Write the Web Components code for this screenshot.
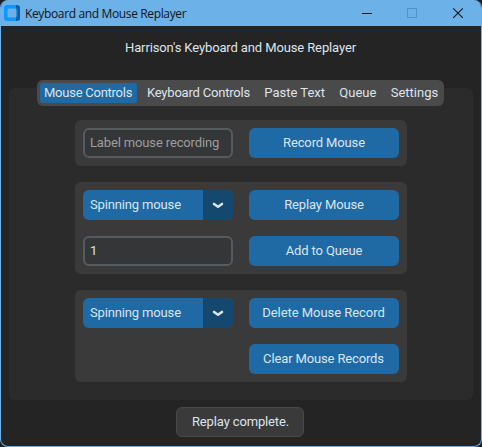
<!DOCTYPE html>
<html lang="en">
<head>
<meta charset="utf-8">
<title>Keyboard and Mouse Replayer</title>
<style>
html, body { margin: 0; height: 100%; background: #16212c; overflow: hidden; }
body { font: 13px/16px Roboto, sans-serif; letter-spacing: -0.14px; color: #dce4ee; }
</style>
</head>
<body>
<replayer-app></replayer-app>
<script>
const define = (name, html) => customElements.define(name, class extends HTMLElement {
  constructor() {
    super();
    this.attachShadow({ mode: 'open' }).innerHTML = html;
  }
});

define('app-window', `
<style>
:host { display: flex; flex-direction: column; box-sizing: border-box; width: 482px; height: 447px;
  background: #242424; border: 1px solid #6cb1e8; border-top: 0; border-radius: 8px; overflow: hidden; }
header { flex: none; height: 26px; display: flex; align-items: center; background: #6cb1e8; color: #10161c;
  font: 12px/16px "Open Sans", sans-serif; padding-left: 3px; }
.logo { flex: none; width: 16px; height: 16px; margin-right: 5px; }
.name { flex: 1; white-space: nowrap; letter-spacing: -0.36px; padding-top: 1px; }
.buttons { flex: none; width: 137px; height: 26px; }
main { flex: 1; display: flex; flex-direction: column; }
</style>
<header>
  <svg class="logo" viewBox="0 0 16 16">
    <path d="M10 0h3a3 3 0 0 1 3 3v10a3 3 0 0 1-3 3h-3z" fill="#0860a8"/>
    <path d="M3 0h9v16H3a3 3 0 0 1-3-3V3a3 3 0 0 1 3-3z" fill="#0c98ff"/>
    <path d="M12 4l2-2v12l-2-2z" fill="#086fc2"/>
    <rect x="3.500" y="3.500" width="9" height="9" rx="1.500" fill="#6cb1e8"/>
  </svg>
  <span class="name"><slot name="title"></slot></span>
  <svg class="buttons" viewBox="344 0 137 26" fill="none">
    <path d="M362 13.500h10" stroke="#10161c"/>
    <rect x="407.500" y="8.500" width="9" height="9" stroke="#5392c4"/>
    <path d="M453.200 8.300l9.600 9.600M462.800 8.300l-9.600 9.600" stroke="#10161c" stroke-width="1.100"/>
  </svg>
</header>
<main><slot></slot></main>`);

define('tab-item', `
<style>
:host { display: block; box-sizing: border-box; height: 20px; padding: 2px 4.500px; border-radius: 3px; white-space: nowrap; }
:host([selected]) { background: #1f6aa5; padding-left: 4px; padding-right: 5px; }
</style><slot></slot>`);

define('tab-view', `
<style>
:host { display: flex; flex-direction: column; align-items: center; width: 464px; height: 320px; margin: 0 auto;
  position: relative; z-index: 0; }
.panel { position: absolute; z-index: -1; inset: 8px 0 0 0; background: #2b2b2b; border-radius: 6px; }
nav { box-sizing: border-box; display: flex; gap: 5.300px; width: 407px; height: 26px; margin-right: 1px; padding: 3px; background: #4a4a4a; border-radius: 6px; }
section { display: flex; flex-direction: column; gap: 16px; padding-top: 14px; }
</style>
<div class="panel"></div>
<nav><slot name="tab"></slot></nav>
<section><slot></slot></section>`);

define('control-card', `
<style>
:host { display: grid; grid-template-columns: 150px 150px; grid-auto-rows: 30px; gap: 16px; padding: 8px;
  background: #3a3a3a; border-radius: 6px; }
::slotted(*) { box-sizing: border-box; }
</style><slot></slot>`);

define('text-entry', `
<style>
:host { display: flex; align-items: center; padding: 0 5px 1px; border: 2px solid #565b5e; border-radius: 6px; background: #343638; white-space: nowrap; letter-spacing: -0.14px; }
:host([placeholder]) { color: #9e9e9c; }
</style><slot></slot>`);

define('action-button', `
<style>
:host { display: flex; align-items: center; justify-content: center; padding-bottom: 1px; border-radius: 6px; background: #1f6aa5; white-space: nowrap; grid-column: 2; }
</style><slot></slot>`);

define('option-menu', `
<style>
:host { display: flex; border-radius: 6px; overflow: hidden; background: #1f6aa5; letter-spacing: -0.15px; }
.value { flex: 1; padding: 6.500px 7px; white-space: nowrap; }
.arrow { flex: none; width: 30px; height: 30px; background: #14486f; }
</style>
<span class="value"><slot></slot></span>
<svg class="arrow" viewBox="0 0 30 30"><path d="M11 13.900l4 2.900 4-2.900" fill="none" stroke="#dce4ee" stroke-width="2.500" stroke-linecap="round" stroke-linejoin="round"/></svg>`);

define('status-label', `
<style>
:host { display: flex; align-items: center; justify-content: center; box-sizing: border-box; width: 128px; height: 30px;
  margin: 7px 0 0 175px; padding-bottom: 1px; padding-left: 1px; border: 1px solid #494949; border-radius: 6px; background: #3a3a3a; white-space: nowrap; }
</style><slot></slot>`);

define('replayer-app', `
<style>
:host { display: block; }
.heading { height: 16px; padding: 14px 1px 24px 0; text-align: center; letter-spacing: -0.12px; }
.tight { letter-spacing: -0.25px; }
.snug { letter-spacing: -0.2px; }
.loose { letter-spacing: 0; }
.wide { letter-spacing: -0.05px; }
.wide, .clear { padding-right: 1px; }
</style>
<app-window>
  <span slot="title">Keyboard and Mouse Replayer</span>
  <div class="heading">Harrison's Keyboard and Mouse Replayer</div>
  <tab-view>
    <tab-item slot="tab" class="tight" selected>Mouse Controls</tab-item>
    <tab-item slot="tab" class="snug">Keyboard Controls</tab-item>
    <tab-item slot="tab" class="loose">Paste Text</tab-item>
    <tab-item slot="tab" class="loose">Queue</tab-item>
    <tab-item slot="tab" class="loose">Settings</tab-item>
    <control-card>
      <text-entry placeholder>Label mouse recording</text-entry>
      <action-button>Record Mouse</action-button>
    </control-card>
    <control-card>
      <option-menu>Spinning mouse</option-menu>
      <action-button>Replay Mouse</action-button>
      <text-entry>1</text-entry>
      <action-button>Add to Queue</action-button>
    </control-card>
    <control-card>
      <option-menu>Spinning mouse</option-menu>
      <action-button class="wide">Delete Mouse Record</action-button>
      <action-button class="clear">Clear Mouse Records</action-button>
    </control-card>
  </tab-view>
  <status-label>Replay complete.</status-label>
</app-window>`);
</script>
</body>
</html>
